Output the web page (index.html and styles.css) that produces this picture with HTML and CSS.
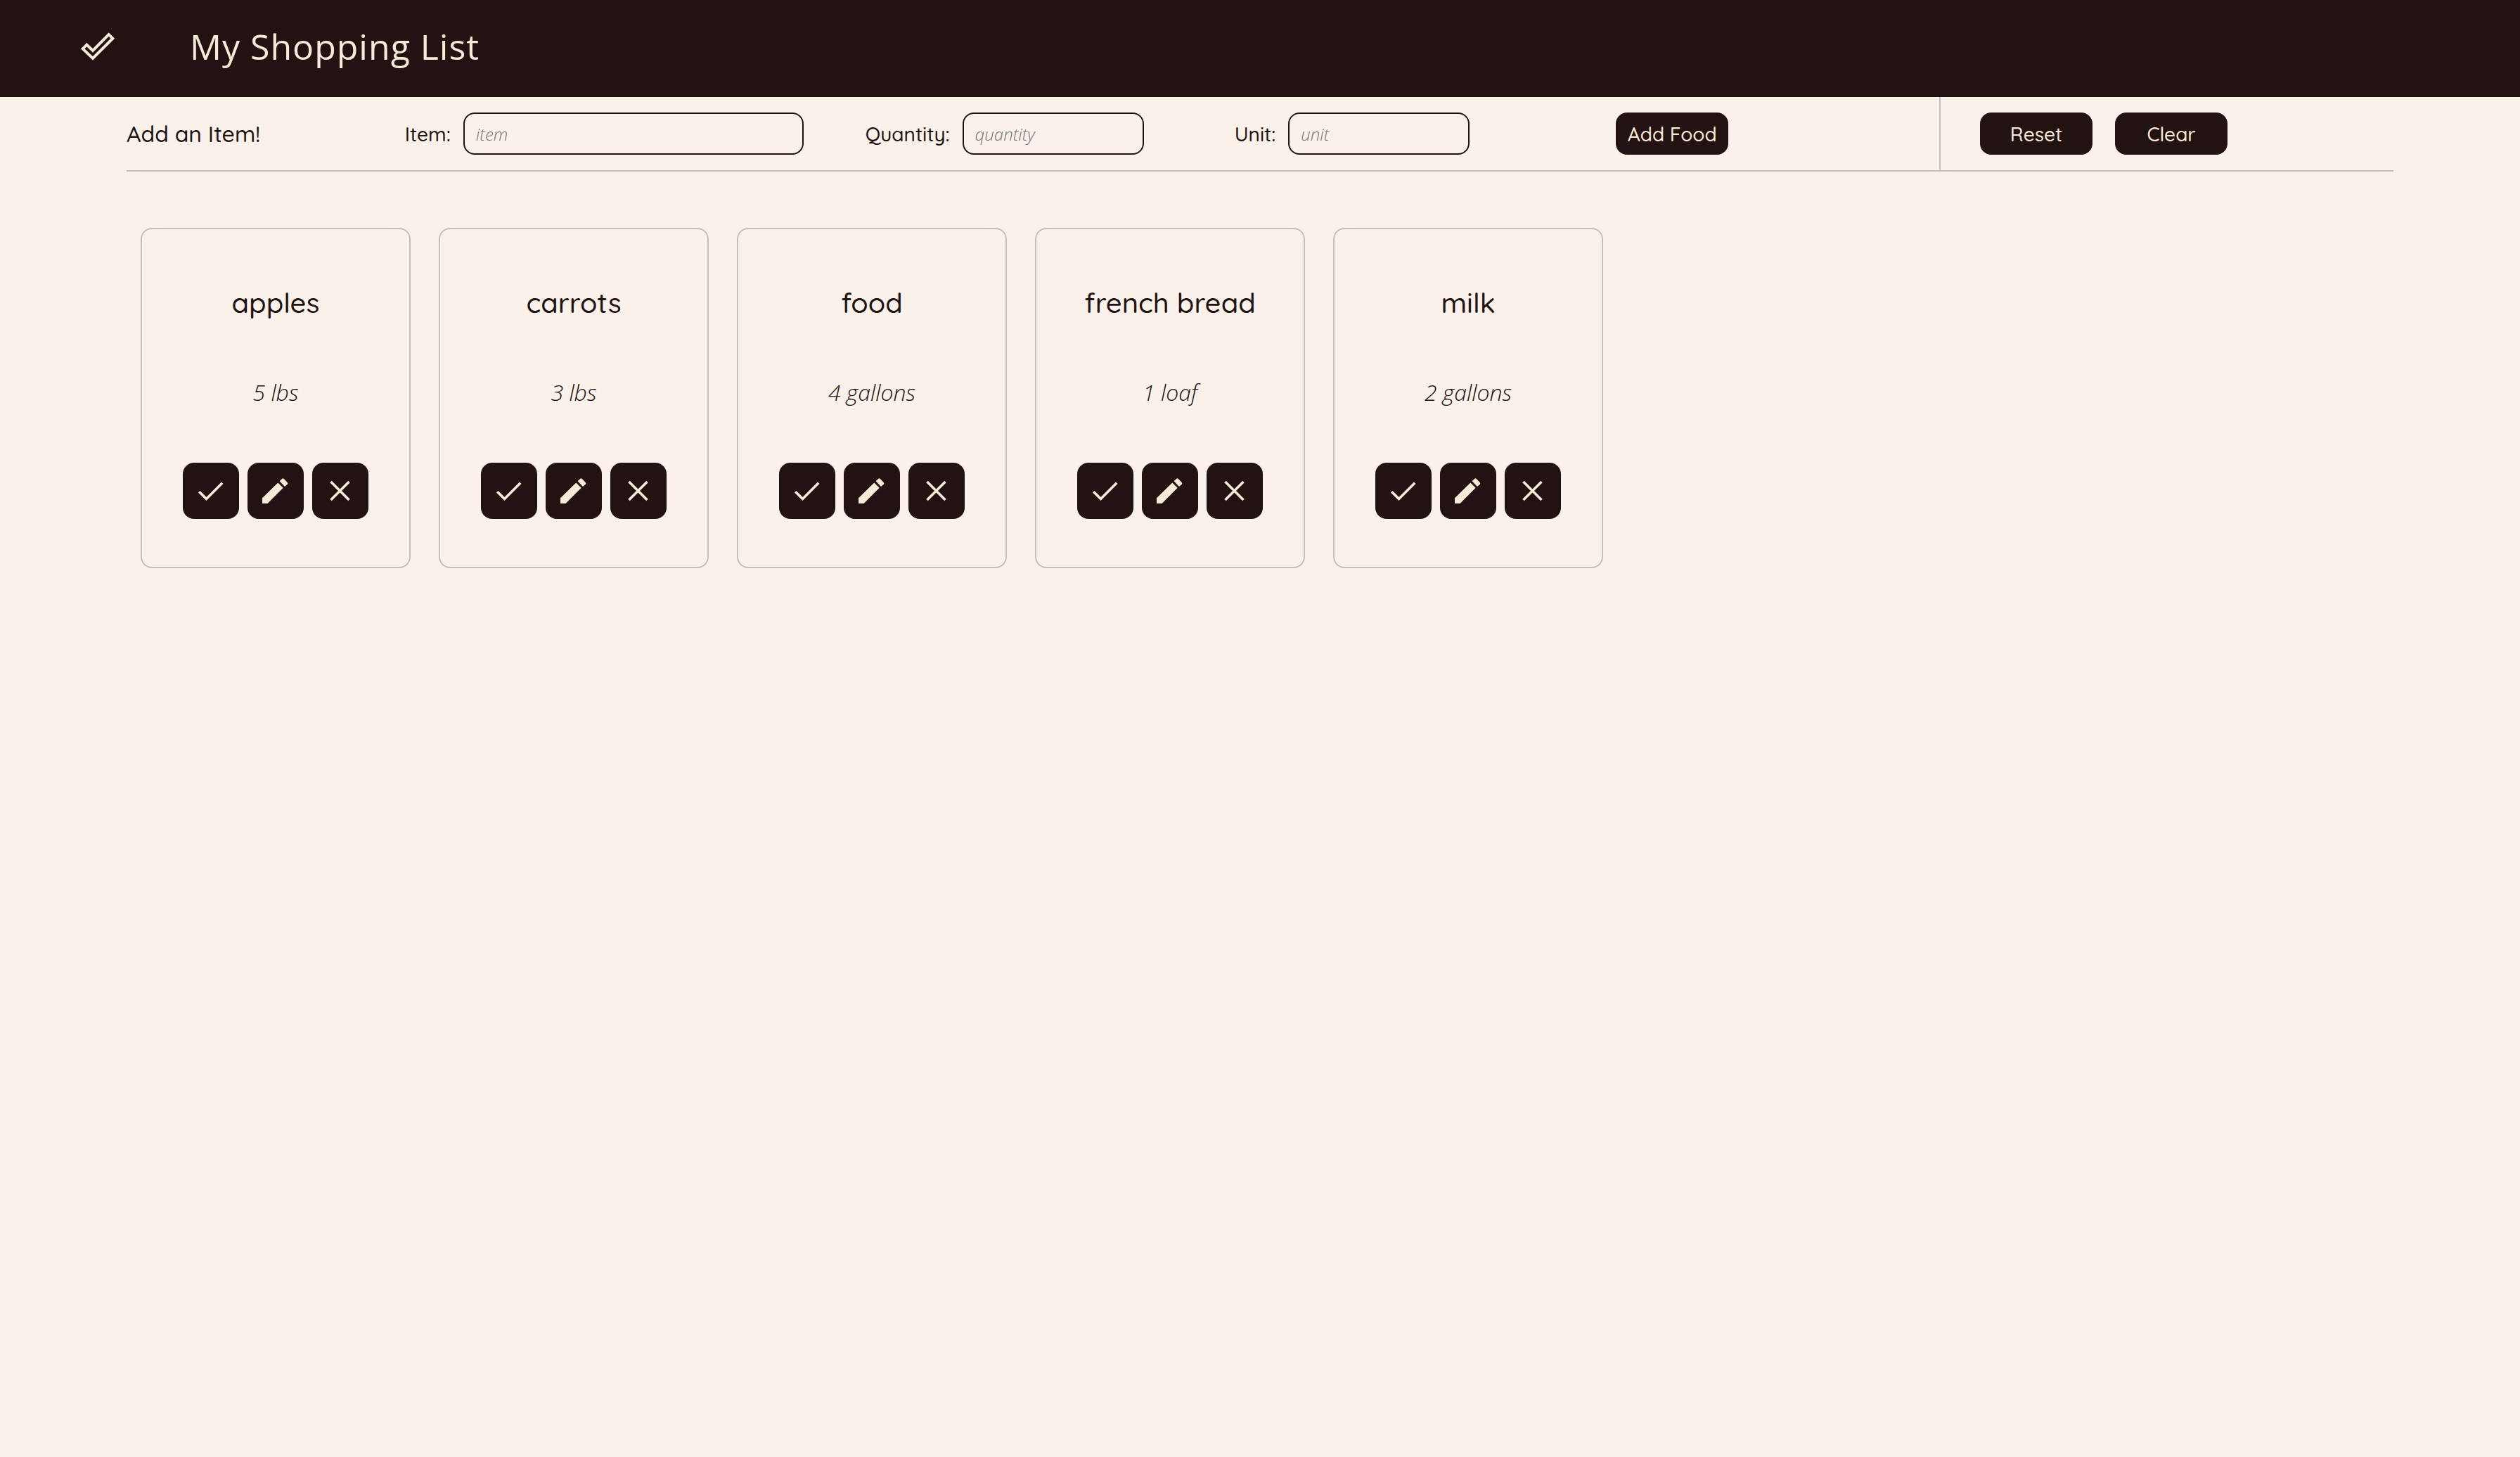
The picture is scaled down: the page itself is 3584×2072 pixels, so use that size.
FILE: index.html
```html
<!DOCTYPE html>
<html lang="en">
<head>
<meta charset="utf-8">
<title>My Shopping List</title>
<link rel="stylesheet" href="styles.css">
</head>
<body>
<svg class="sprite" aria-hidden="true">
  <symbol id="check" viewBox="0 0 48 48"><path d="M7.2 25.2 L17.5 35.4 L40.2 12.7" fill="none" stroke="currentColor" stroke-width="3.6"/></symbol>
  <symbol id="edit" viewBox="0 0 48 48"><path d="M5 42 V34.3 L27.3 12.5 L34.7 19.7 L12.5 42 Z M29.6 10.3 L33 7 Q34.4 5.6 35.8 7 L40.7 11.9 Q42 13.3 40.7 14.7 L37 18 Z" fill="currentColor"/></symbol>
  <symbol id="close" viewBox="0 0 48 48"><path d="M10.5 11 L36.5 37 M36.5 11 L10.5 37" fill="none" stroke="currentColor" stroke-width="3.6"/></symbol>
</svg>
<header class="header">
  <svg class="logo" viewBox="36 27 162 162" aria-hidden="true"><path d="M53 118 L70 101 L96 126 L164 57 L181 74 L96 159 Z" fill="none" stroke="currentColor" stroke-width="12"/></svg>
  <h1 class="title">My Shopping List</h1>
</header>
<main class="page">
  <div class="toolbar">
    <form class="add-form">
      <h2 class="form-title">Add an Item!</h2>
      <div class="field"><label for="item">Item:</label><input class="input input-wide" id="item" type="text" placeholder="item"></div>
      <div class="field"><label for="quantity">Quantity:</label><input class="input" id="quantity" type="text" placeholder="quantity"></div>
      <div class="field"><label for="unit">Unit:</label><input class="input" id="unit" type="text" placeholder="unit"></div>
      <div class="field"><button class="button" type="button">Add Food</button></div>
    </form>
    <div class="list-actions">
      <button class="button" type="button">Reset</button>
      <button class="button" type="button">Clear</button>
    </div>
  </div>
  <ul class="cards">
    <li class="card">
      <h3 class="name">apples</h3>
      <p class="amount">5 lbs</p>
      <div class="actions">
        <button class="icon-button" type="button" aria-label="Check off"><svg class="icon"><use href="#check"/></svg></button>
        <button class="icon-button" type="button" aria-label="Edit"><svg class="icon"><use href="#edit"/></svg></button>
        <button class="icon-button" type="button" aria-label="Remove"><svg class="icon"><use href="#close"/></svg></button>
      </div>
    </li>
    <li class="card">
      <h3 class="name">carrots</h3>
      <p class="amount">3 lbs</p>
      <div class="actions">
        <button class="icon-button" type="button" aria-label="Check off"><svg class="icon"><use href="#check"/></svg></button>
        <button class="icon-button" type="button" aria-label="Edit"><svg class="icon"><use href="#edit"/></svg></button>
        <button class="icon-button" type="button" aria-label="Remove"><svg class="icon"><use href="#close"/></svg></button>
      </div>
    </li>
    <li class="card">
      <h3 class="name">food</h3>
      <p class="amount">4 gallons</p>
      <div class="actions">
        <button class="icon-button" type="button" aria-label="Check off"><svg class="icon"><use href="#check"/></svg></button>
        <button class="icon-button" type="button" aria-label="Edit"><svg class="icon"><use href="#edit"/></svg></button>
        <button class="icon-button" type="button" aria-label="Remove"><svg class="icon"><use href="#close"/></svg></button>
      </div>
    </li>
    <li class="card">
      <h3 class="name">french bread</h3>
      <p class="amount">1 loaf</p>
      <div class="actions">
        <button class="icon-button" type="button" aria-label="Check off"><svg class="icon"><use href="#check"/></svg></button>
        <button class="icon-button" type="button" aria-label="Edit"><svg class="icon"><use href="#edit"/></svg></button>
        <button class="icon-button" type="button" aria-label="Remove"><svg class="icon"><use href="#close"/></svg></button>
      </div>
    </li>
    <li class="card">
      <h3 class="name">milk</h3>
      <p class="amount">2 gallons</p>
      <div class="actions">
        <button class="icon-button" type="button" aria-label="Check off"><svg class="icon"><use href="#check"/></svg></button>
        <button class="icon-button" type="button" aria-label="Edit"><svg class="icon"><use href="#edit"/></svg></button>
        <button class="icon-button" type="button" aria-label="Remove"><svg class="icon"><use href="#close"/></svg></button>
      </div>
    </li>
  </ul>
</main>
</body>
</html>
```
FILE: styles.css
```css
:root {
  --dark: #231212;
  --cream: #f8ead8;
  --page: #faf1ea;
  --line: #c0c0c0;
  --rounded: Quicksand, Inter, sans-serif;
  --sans: "Open Sans", sans-serif;
}

* { box-sizing: border-box; }

body {
  margin: 0;
  background: var(--page);
  color: var(--dark);
  font-family: var(--rounded);
  font-size: 28px;
  font-weight: 500;
}

h1, h2, h3, p, ul { margin: 0; padding: 0; }

.sprite { display: none; }

.header {
  display: flex;
  align-items: center;
  gap: 104px;
  padding: 32px 112px 38px;
  background: var(--dark);
  color: var(--cream);
}

.logo { width: 54px; height: 54px; }

.title {
  font: 400 50px/68px var(--sans);
  letter-spacing: 1px;
}

.page { padding: 0 180px; }

.toolbar {
  display: grid;
  grid-template-columns: 2580fr 644fr;
  border-bottom: 2px solid var(--line);
}

.add-form {
  display: grid;
  grid-template-columns: 396fr 566fr 484fr 464fr 368fr 300fr;
  align-items: center;
  padding: 22px 0;
  border-right: 2px solid var(--line);
}

.form-title {
  font-size: 32px;
  font-weight: 500;
  white-space: nowrap;
}

.field {
  display: flex;
  align-items: center;
  justify-content: flex-end;
  gap: 18px;
}

.input {
  width: 258px;
  height: 60px;
  padding: 0 16px;
  border: 2px solid var(--dark);
  border-radius: 16px;
  background: transparent;
  color: var(--dark);
  font: italic 300 24px var(--sans);
}

.input-wide { width: 484px; }

.input::placeholder { color: #757575; }

.button {
  width: 160px;
  height: 60px;
  padding: 0;
  border: 0;
  border-radius: 16px;
  background: var(--dark);
  color: var(--cream);
  font: 500 28px var(--rounded);
}

.list-actions {
  display: flex;
  align-items: center;
  gap: 32px;
  padding-left: 56px;
}

.cards {
  display: flex;
  flex-wrap: wrap;
  gap: 40px;
  padding: 80px 20px;
  list-style: none;
}

.card {
  width: 384px;
  padding: 76px 0 68px;
  border: 2px solid var(--line);
  border-radius: 16px;
  text-align: center;
}

.name {
  font-size: 40px;
  font-weight: 500;
  line-height: 56px;
}

.amount {
  margin: 76px 0;
  font: italic 300 32px/48px var(--sans);
}

.actions {
  display: flex;
  justify-content: center;
  gap: 12px;
}

.icon-button {
  display: grid;
  place-items: center;
  width: 80px;
  height: 80px;
  padding: 0;
  border: 0;
  border-radius: 16px;
  background: var(--dark);
  color: var(--cream);
}

.icon { width: 48px; height: 48px; }
```
